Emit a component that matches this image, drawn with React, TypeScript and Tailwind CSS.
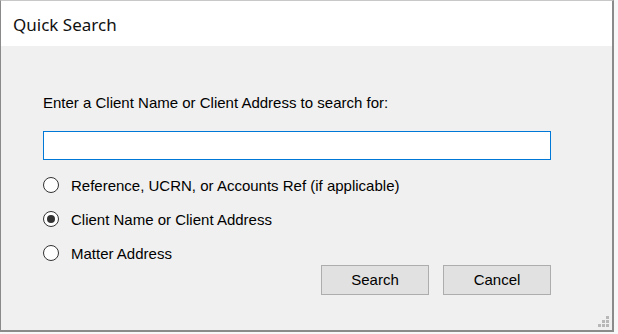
import React from "react";

function Radio({ checked, label }: { checked?: boolean; label: string }) {
  return (
    <div className="flex items-center h-[20px]">
      <div className="w-[16px] h-[16px] rounded-full border border-[#333333] bg-white flex items-center justify-center shrink-0">
        {checked && <div className="w-[8px] h-[8px] rounded-full bg-[#333333]" />}
      </div>
      <span className="ml-[12px] text-[15px] leading-[17px] text-black">{label}</span>
    </div>
  );
}

function Grip() {
  const dots: [number, number][] = [
    [8, 0],
    [4, 4],
    [8, 4],
    [0, 8],
    [4, 8],
    [8, 8],
  ];
  return (
    <div className="absolute right-[3px] bottom-[3px] w-[11px] h-[11px]">
      {dots.map(([x, y], i) => (
        <div
          key={i}
          className="absolute w-[3px] h-[3px] bg-[#b8b8b8]"
          style={{ left: x, top: y }}
        />
      ))}
    </div>
  );
}

export default function App() {
  return (
    <div
      className="w-[618px] h-[334px] bg-[#f7f7f7] overflow-hidden"
      style={{ fontFamily: '"Liberation Sans", Arial, sans-serif' }}
    >
      <div className="w-[614px] h-[332px] border border-[#8a8a8a] border-t-[#c8c8c8] border-r-2 border-b-2 flex flex-col">
        <div className="h-[45px] bg-white flex items-center pl-[12px]">
          <span
            className="text-[17px] text-[#111] leading-none mt-[1px]"
            style={{ fontFamily: '"Noto Sans", "Open Sans", sans-serif' }}
          >
            Quick Search
          </span>
        </div>
        <div className="flex-1 bg-[#f0f0f0] relative pl-[42px] pt-[48px]">
          <div className="text-[15px] leading-[17px] text-black">
            Enter a Client Name or Client Address to search for:
          </div>
          <div className="mt-[20px] w-[508px] h-[29px] bg-white border border-[#0078d7]" />
          <div className="mt-[15px] flex flex-col gap-[14px]">
            <Radio label="Reference, UCRN, or Accounts Ref (if applicable)" />
            <Radio checked label="Client Name or Client Address" />
            <Radio label="Matter Address" />
          </div>
          <div className="absolute left-[320px] top-[219px] flex gap-[14px]">
            <button className="w-[108px] h-[30px] bg-[#e1e1e1] border border-[#adadad] text-[15px] text-black">
              Search
            </button>
            <button className="w-[108px] h-[30px] bg-[#e1e1e1] border border-[#adadad] text-[15px] text-black">
              Cancel
            </button>
          </div>
          <Grip />
        </div>
      </div>
    </div>
  );
}
